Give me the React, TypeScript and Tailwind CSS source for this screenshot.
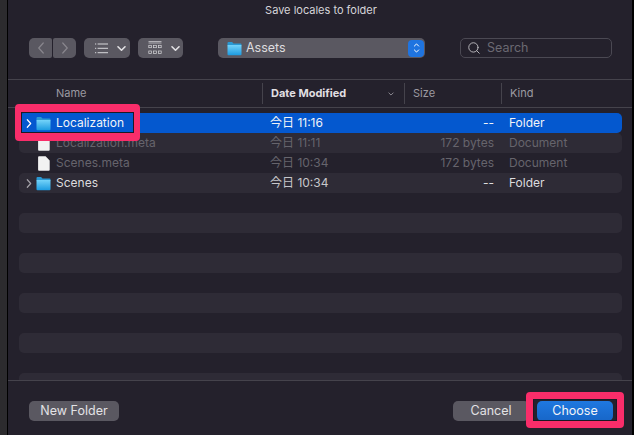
import { Search } from "lucide-react";

const rows = [
  { name: "Localization", date: "今日 11:16", size: "--", kind: "Folder", folder: true, selected: true },
  { name: "Localization.meta", date: "今日 11:11", size: "172 bytes", kind: "Document", folder: false },
  { name: "Scenes.meta", date: "今日 10:34", size: "172 bytes", kind: "Document", folder: false },
  { name: "Scenes", date: "今日 10:34", size: "--", kind: "Folder", folder: true },
];

const FolderIcon = () => (
  <svg width="15" height="15" viewBox="0 0 15 15" className="shrink-0">
    <defs>
      <linearGradient id="folderFill" x1="0" y1="0" x2="0" y2="1">
        <stop offset="0" stopColor="#74d3f9" />
        <stop offset="1" stopColor="#1c9be0" />
      </linearGradient>
    </defs>
    <path d="M0.5 2a1 1 0 0 1 1-1h3.6l1.4 1.5h7a1 1 0 0 1 1 1V4.4H0.5z" fill="#2a98d2" />
    <path d="M0.5 4h14v9.2a1 1 0 0 1-1 1h-12a1 1 0 0 1-1-1z" fill="url(#folderFill)" />
  </svg>
);

const DocIcon = () => (
  <svg width="12" height="15" viewBox="0 0 12 15" className="shrink-0">
    <path d="M1 0.3h6.6L11.7 4.6v9.2a.9.9 0 0 1-.9.9H1a.9.9 0 0 1-.9-.9V1.2A.9.9 0 0 1 1 .3z" fill="#f2f2f2" />
  </svg>
);

const Chevron = ({ dir, className, weight }: { dir: "left" | "right" | "down"; className: string; weight?: number }) => {
  const d = dir === "left" ? "M6 1 1.5 6 6 11" : dir === "right" ? "M1.5 1 6 6l-4.5 5" : "M1 1.5 4.5 5 8 1.5";
  const box = dir === "down" ? "0 0 9 6.5" : "0 0 7.5 12";
  return (
    <svg viewBox={box} fill="none" stroke="currentColor" strokeLinecap="round" strokeLinejoin="round" className={className}>
      <path d={d} strokeWidth={weight ?? (dir === "down" ? 1.6 : 1.2)} />
    </svg>
  );
};

const ListIcon = () => (
  <svg width="13" height="11" viewBox="0 0 13 11" className="text-[#d8d7db]" fill="currentColor">
    <rect x="0" y="0.5" width="1.2" height="1" />
    <rect x="0" y="4.8" width="1.2" height="1" />
    <rect x="0" y="9.2" width="1.2" height="1" />
    <rect x="2.6" y="0.5" width="10.4" height="1" />
    <rect x="2.6" y="4.8" width="10.4" height="1" />
    <rect x="2.6" y="9.2" width="10.4" height="1" />
  </svg>
);

const GridIcon = () => (
  <svg width="14" height="14" viewBox="0 0 14 14" className="text-[#d8d7db]" fill="none" stroke="currentColor" strokeWidth="0.7">
    <path d="M0.5 0.5h13M0.5 2h13" />
    <rect x="0.8" y="4.3" width="2.8" height="2.4" />
    <rect x="5.6" y="4.3" width="2.8" height="2.4" />
    <rect x="10.4" y="4.3" width="2.8" height="2.4" />
    <rect x="0.8" y="10" width="2.8" height="2.4" />
    <rect x="5.6" y="10" width="2.8" height="2.4" />
    <rect x="10.4" y="10" width="2.8" height="2.4" />
  </svg>
);

const App = () => {
  return (
    <div className="relative flex h-[435px] w-[634px] overflow-hidden bg-[#24212c] font-['Inter','Noto_Sans_CJK_JP',sans-serif] text-[12px] text-[#dddcdf]">
      {/* window edge */}
      <div className="w-2 shrink-0 border-r border-black bg-[#2c2b2e]" />

      <div className="flex min-w-0 flex-1 flex-col">
        <div className="h-[21px] pt-[3px] pl-[2px] text-center text-[11px] leading-[14px] text-[#d6d5d9]">Save locales to folder</div>

        {/* Toolbar */}
        <div className="mt-[17px] flex h-5 items-stretch pl-[21px]">
          <div className="flex w-[23px] items-center justify-center rounded-l-[5px] rounded-r-[2px] bg-[#5a5861]">
            <Chevron dir="left" className="h-3 w-[8px] text-[#88868d]" />
          </div>
          <div className="ml-px flex w-[23px] items-center justify-center rounded-l-[2px] rounded-r-[5px] bg-[#5a5861]">
            <Chevron dir="right" className="h-3 w-[8px] text-[#88868d]" />
          </div>
          <div className="ml-2 flex w-[46px] items-center gap-[9px] rounded-[5px] bg-[#5a5861] pl-[11px]">
            <ListIcon />
            <Chevron dir="down" className="h-[7px] w-[9px] text-[#e2e1e4]" />
          </div>
          <div className="ml-2 flex w-[45px] items-center gap-[9px] rounded-[5px] bg-[#5a5861] pl-[10px]">
            <GridIcon />
            <Chevron dir="down" className="h-[7px] w-[9px] text-[#e2e1e4]" />
          </div>
          <div className="ml-[35px] flex w-[207px] items-center rounded-[5px] bg-[#5a5861] pl-[9px] pr-[1px]">
            <FolderIcon />
            <span className="ml-[4px] flex-1 text-[12.5px] text-[#dddcdf]">Assets</span>
            <div className="flex h-[17px] w-4 flex-col items-center justify-center gap-[2px] rounded-[4px] bg-[#1f74e0]">
              <Chevron dir="down" className="h-[4px] w-[7px] rotate-180 text-white" />
              <Chevron dir="down" className="h-[4px] w-[7px] text-white" />
            </div>
          </div>
          <div className="ml-[35px] flex w-[152px] items-center rounded-[5px] border border-[#4b4953] pl-[6px]">
            <Search size={14} strokeWidth={1.6} className="text-[#bdbcc1]" />
            <span className="ml-[6px] pt-px text-[12.5px] text-[#6b6972]">Search</span>
          </div>
        </div>

        {/* Column headers */}
        <div className="mt-[21px] grid h-[29px] grid-cols-[254px_142px_97px_1fr] items-center border-y border-[#45434c] text-[11px]">
          <div className="pl-[48px] text-[#9c9aa1]">Name</div>
          <div className="flex h-[21px] items-center justify-between border-l border-[#45434c] pl-2 pr-[9px]">
            <span className="font-bold text-[#e0dfe2]">Date Modified</span>
            <Chevron dir="down" className="h-[4px] w-[8px] text-[#8b8990]" />
          </div>
          <div className="flex h-[21px] items-center border-l border-[#45434c] pl-2 text-[#9c9aa1]">Size</div>
          <div className="flex h-[21px] items-center border-l border-[#45434c] pl-2 text-[#9c9aa1]">Kind</div>
        </div>

        {/* File list */}
        <div className="flex-1 overflow-hidden pt-[5px] pl-[11px] pr-[10px]">
          {Array.from({ length: 14 }).map((_, i) => {
            const row = rows[i];
            if (!row) {
              return <div key={i} className={`h-5 rounded-[5px] ${i % 2 === 1 ? "bg-[#2e2b36]" : ""}`} />;
            }
            const dim = !row.folder;
            return (
              <div
                key={row.name}
                className={`grid h-5 grid-cols-[251px_100px_124px_1fr] items-center rounded-[5px] text-[12px] ${
                  row.selected ? "bg-[#0458cf] text-[#f2f4f8]" : i % 2 === 1 ? "bg-[#2e2b36]" : ""
                } ${dim ? "text-[#66646c]" : ""}`}
              >
                <div className="flex items-center">
                  <div className="flex w-[17px] justify-center pl-[2px]">
                    {row.folder && (
                      <Chevron
                        dir="right"
                        weight={1.6}
                        className={`h-[9px] w-[6px] ${row.selected ? "text-white" : "text-[#a3a1a8]"}`}
                      />
                    )}
                  </div>
                  <div className="flex w-[15px] justify-center">{row.folder ? <FolderIcon /> : <DocIcon />}</div>
                  <span className="ml-[5px]">{row.name}</span>
                </div>
                <div className={row.selected ? "" : row.folder ? "text-[#c8c7cb]" : ""}>{row.date}</div>
                <div className="text-right">{row.size}</div>
                <div className="pl-[15px]">{row.kind}</div>
              </div>
            );
          })}
        </div>

        {/* Footer */}
        <div className="flex h-[55px] shrink-0 items-start border-t border-[#45434c] pt-[20px] pl-[21px] pr-[19px] text-[12.5px]">
          <button className="h-5 w-[90px] rounded-[5px] bg-[#5a5861] text-[#e3e2e5]">New Folder</button>
          <button className="ml-auto h-5 w-[76px] rounded-[5px] bg-[#5a5861] text-[#e3e2e5]">Cancel</button>
          <button className="ml-[8px] h-5 w-[76px] rounded-[5px] bg-gradient-to-b from-[#1f78e0] to-[#1766c8] text-[#f2f4f8]">Choose</button>
        </div>
      </div>

      <div className="w-[2px] shrink-0 bg-black" />

      {/* Annotation boxes */}
      <div className="absolute left-[15px] top-[104px] h-[37px] w-[125px] rounded-[4px] border-x-[6px] border-y-[8px] border-[#f92d6a] shadow-[inset_0_0_0_1px_#1b1a24]" />
      <div className="absolute left-[526px] top-[392px] h-[36px] w-[98px] rounded-[4px] border-[7px] border-[#f92d6a] shadow-[inset_0_0_0_1px_#1b1a24]" />
    </div>
  );
};

export default App;
